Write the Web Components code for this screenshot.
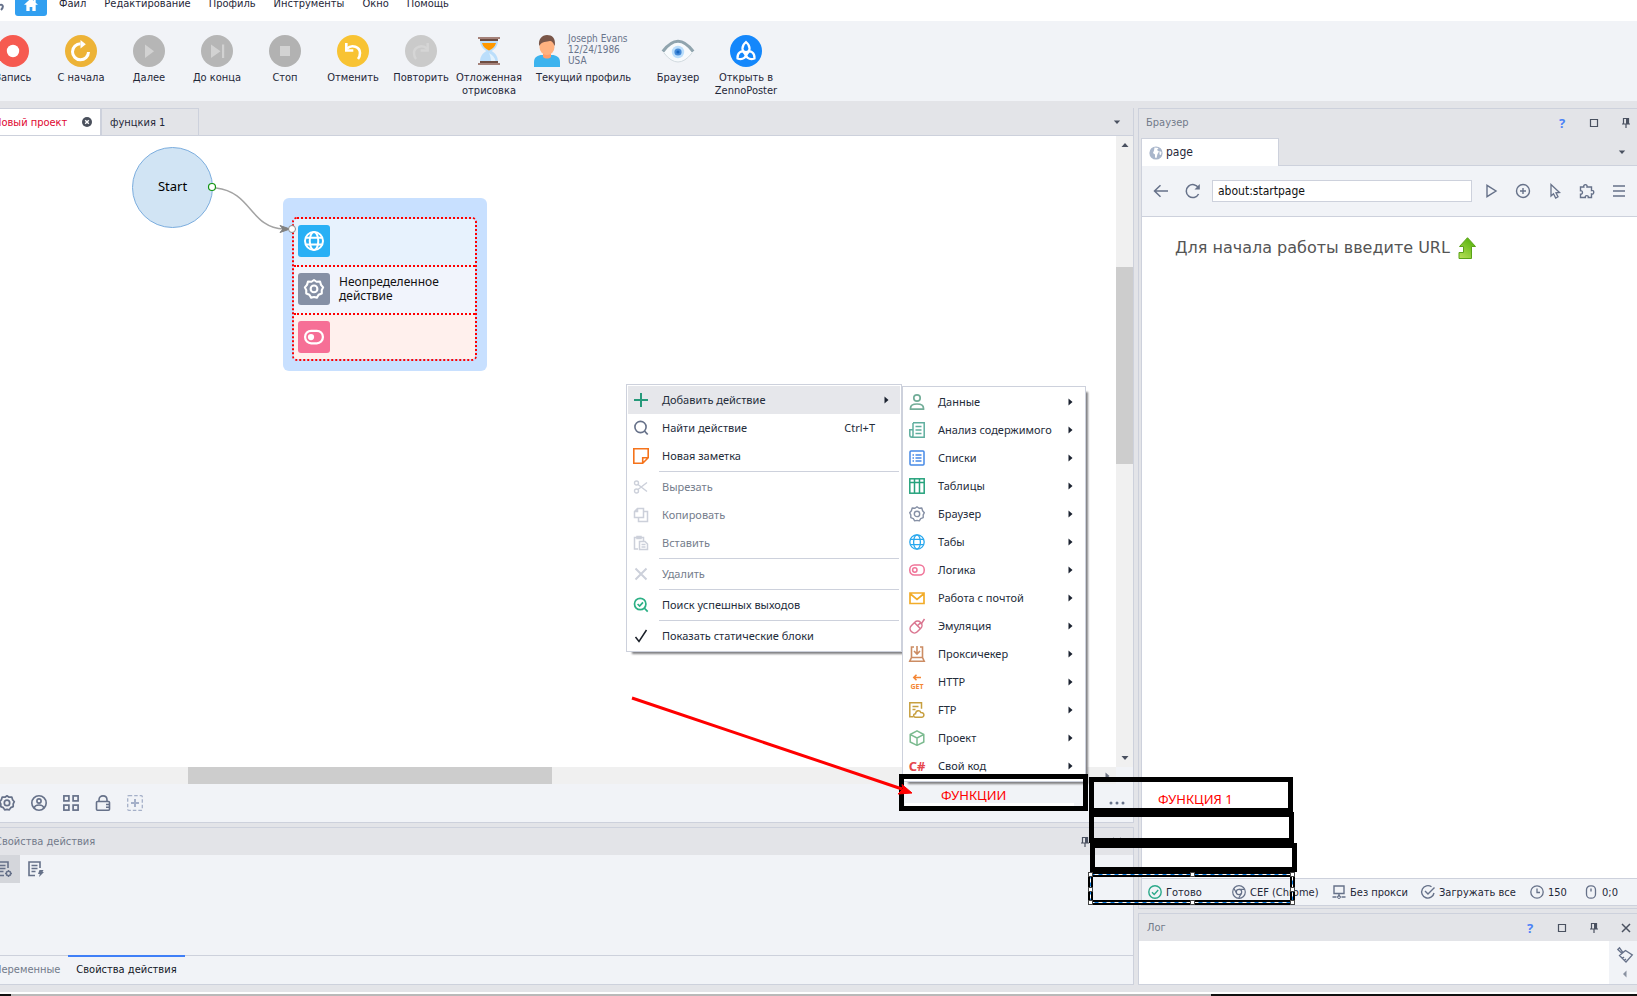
<!DOCTYPE html>
<html lang="ru">
<head>
<meta charset="utf-8">
<title>Новый проект</title>
<style>
  html, body { margin: 0; }
  body {
    --line: #cdd1dc;
    --chrome: #e3e4e8;
    --surface: #f1f3f7;
    --ink: #1f2738;
    --muted: #727a8a;
    --icon: #667189;
    --ui-font: "DejaVu Sans Condensed", "DejaVu Sans", sans-serif;
    --menu-font: "Noto Sans", "Open Sans", sans-serif;
    font: 11px/13px var(--ui-font);
    color: var(--ink);
    background: #fff;
    overflow-x: hidden;
  }
</style>
</head>
<body>
<studio-app></studio-app>

<script>
const RESET = `
  *, *::before, *::after { box-sizing: border-box; }
  :host { box-sizing: border-box; }
  button, input { font: inherit; color: inherit; margin: 0; padding: 0; border: 0; background: none; }
  a { color: inherit; text-decoration: none; }
`;

function define(name, css, markup) {
  customElements.define(name, class extends HTMLElement {
    connectedCallback() {
      if (this.shadowRoot) return;
      const template = document.createElement('template');
      template.innerHTML = `<style>${RESET}${css}</style>` + (typeof markup === 'function' ? markup(this) : markup);
      this.attachShadow({ mode: 'open' }).append(template.content.cloneNode(true));
    }
  });
}

/* ---------- icons: [viewBox size, drawing] ---------- */
const S = 'fill="none" stroke="currentColor" stroke-width="1.5"';
const GEAR = (w) => `<g fill="none" stroke="currentColor" stroke-width="${w}" stroke-linejoin="round"><path d="M8 .8 10 2.2 12.8 2 13.6 4.7 15.3 6.7 14.2 8.9 14.2 11.6 11.7 12.6 10.3 14.9 8 14.4 5.7 14.9 4.3 12.6 1.8 11.6 1.8 8.9 .7 6.7 2.4 4.7 3.2 2 6 2.2Z"/><circle cx="8" cy="7.9" r="2.7"/></g>`;
const GLOBE = (w) => `<g fill="none" stroke="currentColor" stroke-width="${w}"><circle cx="8" cy="8" r="7.2"/><ellipse cx="8" cy="8" rx="3.4" ry="7.2"/><path d="M1.4 5.3h13.2M1.4 10.7h13.2"/></g>`;
const ICONS = {
  home: [24, '<path fill="#fff" d="M12 2 1.500 11.500H5V21h5v-6h4v6h5v-9.500h3.500L19 8.500V4h-3v2Z"/>'],
  record: [32, '<circle cx="16" cy="16" r="16" fill="#f65a50"/><circle cx="16" cy="16" r="6.200" fill="#fff"/>'],
  restart: [32, '<circle cx="16" cy="16" r="16" fill="#edb337"/><path d="M15.500 8.800A8 8 0 1 0 23.500 17" fill="none" stroke="#fff" stroke-width="3"/><path d="M15.500 5 20.800 9.200 15.500 13.500Z" fill="#fff"/>'],
  next: [32, '<circle cx="16" cy="16" r="16" fill="#b6b6b6"/><path d="M12 9.500v13.500L21 16.200Z" fill="#d2d2d2"/>'],
  toend: [32, '<circle cx="16" cy="16" r="16" fill="#b6b6b6"/><path d="M10 9.500v13.500L19.500 16.200ZM21 9.500h2.200v13.500H21Z" fill="#d2d2d2"/>'],
  stop: [32, '<circle cx="16" cy="16" r="16" fill="#b2b2b2"/><path d="M11 11h10v10H11Z" fill="#d2d2d2"/>'],
  undo: [32, '<circle cx="16" cy="16" r="16" fill="#f8c333"/><path d="M10 13.500C15 9 23 12 23 18c0 2.500-.8 4.500-2 6" fill="none" stroke="#fff" stroke-width="2.600"/><path d="M9.300 8v7.500h7" fill="none" stroke="#fff" stroke-width="2.600"/>'],
  redo: [32, '<circle cx="16" cy="16" r="16" fill="#cacaca"/><path d="M22 13.500C17 9 9 12 9 18c0 2.500.8 4.500 2 6" fill="none" stroke="#d5d5d5" stroke-width="2.400"/><path d="M22.700 8v7.500h-7" fill="none" stroke="#d5d5d5" stroke-width="2.400"/>'],
  hourglass: [32, '<path d="M7 5h18c0 6-3 9-6.500 11C22 18 25 21 25 27H7c0-6 3-9 6.500-11C10 14 7 11 7 5Z" fill="#bbdefb"/><path d="M9 8h14c-1 4-4 6-7 7.500C13 14 10 12 9 8Z" fill="#ff9800"/><path d="M18 26c0-3-1-6-2-8 4 2 6 5 6.500 8Z" fill="#e3f2fd"/><path d="M5 2h22v2H5ZM5 28h22v2H5Z" fill="#a5827a"/><path d="M7 4h18v2H7ZM7 26h18v2H7Z" fill="#6d4c41"/>'],
  person: [32, '<path d="M3 32v-5c0-5 4-7 8-7h10c4 0 8 2 8 7v5Z" fill="#3cb3ee"/><path d="M12 17h8v5c-2 2-6 2-8 0Z" fill="#ff9d6b"/><ellipse cx="16" cy="12" rx="7.500" ry="8" fill="#ffb17f"/><path d="M8.200 11C7 4 11 0 16 0s9 3 7.800 11c-2-4-3-5-5-5-3 1-8 0-10.600 5Z" fill="#795548"/>'],
  eye: [32, '<path d="M0 16Q16-4 32 16 16 37 0 16Z" fill="#f7fafc"/><path d="M2 18Q16 36 30 18" fill="none" stroke="#d3dbe0" stroke-width="1"/><path d="M.8 16.500Q16-4 31.200 16.500" fill="none" stroke="#90a4ae" stroke-width="3"/><circle cx="16" cy="17" r="6.200" fill="#bbdefb"/><circle cx="16" cy="17" r="3.600" fill="#448ad8"/><circle cx="16" cy="17" r="1.600" fill="#1565c0"/>'],
  poster: [32, '<circle cx="16" cy="16" r="16" fill="#1487fb"/><g fill="none" stroke="#fff" stroke-width="2.200"><path d="M16 7C11 11 11.500 16 16 20 20.500 16 21 11 16 7Z"/><path d="M7.500 23.500C7 18 11 14.500 16.500 17.500 17 22 13 25.500 7.500 23.500Z"/><path d="M24.500 23.500C25 18 21 14.500 15.500 17.500 15 22 19 25.500 24.500 23.500Z"/></g>'],
  tabclose: [10, '<circle cx="5" cy="5" r="5" fill="#4a505c"/><path d="M3.200 3.200l3.600 3.600M6.800 3.200 3.200 6.800" stroke="#fff" stroke-width="1.400"/>'],
  plus: [16, '<path d="M8 1v14M1 8h14" fill="none" stroke="#26997a" stroke-width="2"/>'],
  search: [16, '<circle cx="7.500" cy="7" r="5.600" fill="none" stroke="#667189" stroke-width="1.600"/><path d="M11.500 11 14.700 14.500" stroke="#667189" stroke-width="1.800"/>'],
  note: [16, '<path d="M.8.800h14.400v8.900L9.700 15.200H.8ZM15 9.700H9.700V15" fill="none" stroke="#f5731b" stroke-width="1.600"/>'],
  cut: [16, `<g fill="none" stroke="currentColor" stroke-width="1.400"><circle cx="3.500" cy="4" r="2"/><circle cx="3.500" cy="12" r="2"/><path d="M5 5.500 14 12.500M5 10.500 14 3.500"/></g>`],
  copy: [16, `<g ${S}><path d="M4.500 1.500h6v9H1.500v-6ZM4.500 1.500v3h-3"/><path d="M11 4.500h3.500v10h-9V11"/></g>`],
  paste: [16, `<g ${S}><path d="M5 14H1.500V2.500h9V6M4 1.500h4v2H4Z"/><path d="M6.500 6.500H12l2.500 2.500v5.500h-8ZM8.500 9.500h4M8.500 12h4"/></g>`],
  remove: [16, '<path d="M2.500 2.500l11 11M13.500 2.500l-11 11" stroke="currentColor" stroke-width="2"/>'],
  found: [16, '<g fill="none" stroke="#2cb085" stroke-width="1.700"><circle cx="7.200" cy="7" r="5.700"/><path d="M4.600 7l2 2 3.400-3.600M11.200 11l3.500 3.700"/></g>'],
  check: [16, '<path d="M2.500 9 6 13.500 13.500 2" fill="none" stroke="#1b2029" stroke-width="1.500"/>'],
  data: [16, '<g fill="none" stroke="#72ad98" stroke-width="1.700"><circle cx="8" cy="4" r="3.200"/><path d="M1.500 15.200v-1C1.500 11 4 10 8 10s6.500 1 6.500 4.200v1Z"/></g>'],
  analysis: [16, '<g fill="none" stroke="#5fae9e" stroke-width="1.500"><path d="M4 .8h11.200v14.400H2.800C1.500 15.200.8 14.500.8 13V7.800H4M4 1v12c0 1.400-.5 2.200-1.500 2.200M6.500 4.500h6M6.500 8h6M6.500 11.500h6"/></g>'],
  list: [16, '<g fill="none" stroke="#4589e6" stroke-width="1.500"><rect x="1" y="1" width="14" height="14" rx="1"/><path d="M3.500 5h1.500M6.500 5h6M3.500 8h1.500M6.500 8h6M3.500 11h1.500M6.500 11h6"/></g>'],
  table: [16, '<g fill="none" stroke="#25a27c" stroke-width="1.500"><rect x=".8" y=".8" width="14.400" height="14.400"/><path d="M1 4.500h14M5.500 1v14M10.500 1v14"/></g>'],
  gear: [16, GEAR(1.4)],
  gearbold: [16, GEAR(1.7)],
  globe: [16, GLOBE(1.3)],
  globebold: [16, GLOBE(1.6)],
  toggle: [16, '<g fill="none" stroke="#f07398" stroke-width="1.500"><rect x=".8" y="3" width="14.400" height="10" rx="4.500"/><circle cx="5.800" cy="8" r="2.200"/></g>'],
  togglebold: [16, '<rect x=".9" y="3" width="14.200" height="10" rx="4.800" fill="none" stroke="#fff" stroke-width="1.800"/><circle cx="5.600" cy="8" r="2.500" fill="#fff"/>'],
  mail: [16, '<path d="M1 3h14v10.500H1ZM1.500 4 8 9.500 14.500 4" fill="none" stroke="#f2ac29" stroke-width="1.700"/>'],
  mouse: [16, '<g fill="none" stroke="#da7590" stroke-width="1.500"><rect x="2.800" y="2.500" width="8.500" height="13" rx="4" transform="rotate(45 7 9)"/><path d="M5.500 4.800l6 6M8.500 7.800 11 5.300l1.500.2L15.500 1"/></g>'],
  proxycheck: [16, '<g fill="none" stroke="#cc8c63" stroke-width="1.600"><path d="M5 1H2.500v10.500h11V1H11M8 0v7.500M5 5l3 3 3-3M.8 15.200l1.700-3.700h11l1.700 3.700Z"/></g>'],
  http: [16, '<path d="M12 3.500H5M7.500.800 4.800 3.500l2.700 2.700" fill="none" stroke="#f58634" stroke-width="1.600"/><text x="8" y="15" text-anchor="middle" font-family="Noto Sans, sans-serif" font-weight="700" font-size="7" fill="#f58634">GET</text>'],
  ftp: [16, '<g fill="none" stroke="#c79f3f" stroke-width="1.500"><path d="M4 14.800H.8V.8h11.700v6M3.500 4.500h6M3.500 7.500h3"/><path d="M6.500 15.200c-2.500 0-2.500-3.500 0-3.500C7 8 11 8 11.800 10.500c4-.3 4 4.700.7 4.700Z"/></g>'],
  project: [16, '<path d="M8 .8 14.800 4.500v7.500L8 15.300 1.200 12V4.500ZM1.500 4.700 8 8l6.500-3.300M8 8v7" fill="none" stroke="#7cbb90" stroke-width="1.500" stroke-linejoin="round"/>'],
  csharp: [16, '<text x="8" y="13" text-anchor="middle" font-family="Noto Sans, sans-serif" font-weight="700" font-size="13" fill="#e6484d">C#</text>'],
  profile: [16, '<g fill="none" stroke="currentColor" stroke-width="1.600"><circle cx="8" cy="8" r="7.200"/><circle cx="8" cy="6" r="2.100"/><path d="M3.300 13c.7-4 8.700-4 9.400 0"/></g>'],
  grid: [16, '<g fill="none" stroke="currentColor" stroke-width="1.700"><rect x=".9" y=".9" width="5" height="5"/><rect x="10.100" y=".9" width="5" height="5"/><rect x=".9" y="10.100" width="5" height="5"/><rect x="10.100" y="10.100" width="5" height="5"/></g>'],
  lock: [16, '<g fill="none" stroke="currentColor" stroke-width="1.600"><rect x="1.500" y="6.500" width="13" height="8.700" rx="1"/><path d="M4 6.500V5c0-5.500 8-5.500 8 0v1.500M11 9.500h3M11 12.300h3"/></g>'],
  addbox: [16, '<g fill="none" stroke="#a5b0c8"><rect x=".7" y=".7" width="14.600" height="14.600" rx="1" stroke-width="1.300" stroke-dasharray="3.500 2"/><path d="M8 4v8M4 8h8" stroke-width="2"/></g>'],
  dots: [16, '<g fill="currentColor"><circle cx="2" cy="8" r="1.500"/><circle cx="8" cy="8" r="1.500"/><circle cx="14" cy="8" r="1.500"/></g>'],
  docgear: [16, '<g fill="none" stroke="currentColor" stroke-width="1.600"><path d="M12 7V1H1v13.500h7M3.500 4.500h6M3.500 7.500h6M3.500 10.500h4"/><circle cx="12.500" cy="12.500" r="2.200"/></g><path d="M12.500 9v7M9 12.500h7" stroke="currentColor" stroke-width="1" stroke-dasharray="1.500 4"/>'],
  docflash: [16, '<path d="M12 7V1H1v13.500h6M3.500 4.500h6M3.500 7.500h6M3.500 10.500h4" fill="none" stroke="currentColor" stroke-width="1.600"/><path d="M11.500 9h4l-1 2h1.500L11 16l.8-3H10Z" fill="currentColor"/>'],
  down: [8, '<path d="M.8 2.500h6.400L4 6Z" fill="#4a5160"/>'],
  up: [8, '<path d="M.5 6h7L4 2Z" fill="#4a5160"/>'],
  dn: [8, '<path d="M.5 2h7L4 6Z" fill="#4a5160"/>'],
  right: [8, '<path d="M2.500.500v7L6.500 4Z" fill="currentColor"/>'],
  left: [8, '<path d="M5.500.500v7L2 4Z" fill="#8a92a1"/>'],
  max: [10, '<path d="M1.500 1.500h7v7h-7Z" fill="none" stroke="#4a5160" stroke-width="1.200"/>'],
  pin: [10, '<path d="M2.500.500h5v5.500h-5ZM1 6h8M5 6v4" fill="none" stroke="#4a5160" stroke-width="1.200"/><path d="M5 1h2v5H5Z" fill="#4a5160"/>'],
  close: [10, '<path d="M1 1l8 8M9 1 1 9" stroke="#4a5160" stroke-width="1.500"/>'],
  world: [14, '<circle cx="7" cy="7" r="6.600" fill="#a9b6cb"/><path d="M5.500 1.500 9.500 2 8 4l2 1.500L8.500 8l-1 4-1.500-.5V8.500L4 7l1-2.500ZM10.500 5l2 1-.5 3-1.500-.5Z" fill="#fff"/>'],
  back: [16, '<path d="M15 8H2M7.500 2.200 1.500 8l6 5.800" fill="none" stroke="currentColor" stroke-width="1.500"/>'],
  reload: [16, '<path d="M13.600 11A6.500 6.500 0 1 1 13.500 5" fill="none" stroke="currentColor" stroke-width="1.500"/><path d="M14.800 1v5.500H9.500Z" fill="currentColor"/>'],
  play: [16, '<path d="M4 2.300v11.400L13 8Z" fill="none" stroke="currentColor" stroke-width="1.400"/>'],
  circleplus: [16, '<g fill="none" stroke="currentColor" stroke-width="1.400"><circle cx="8" cy="8" r="6.500"/><path d="M8 5v6M5 8h6"/></g>'],
  pointer: [16, '<path d="M4 1.500v11.500l2.500-2.300 2.200 4.300 2.300-1.200-2-4 3.500-.3Z" fill="none" stroke="currentColor" stroke-width="1.300"/>'],
  puzzle: [16, '<path d="M1.500 4h3.300C4 .8 8.800.8 8 4h4.500v3.500c3-.8 3 4.300 0 3.500v3.500H9.300c.5-2.500-3.600-2.500-3 0H1.500v-3.300c2.600.4 2.600-3.900 0-3.500Z" fill="none" stroke="currentColor" stroke-width="1.400"/>'],
  burger: [16, '<path d="M2 3h12M2 8h12M2 13h12" stroke="currentColor" stroke-width="1.400"/>'],
  ready: [14, '<g fill="none" stroke="#2ba98a" stroke-width="1.400"><circle cx="7" cy="7" r="6.200"/><path d="M4 7.200l2.200 2.200L10.200 5"/></g>'],
  chrome: [14, '<g fill="none" stroke="currentColor" stroke-width="1.200"><circle cx="7" cy="7" r="6.300"/><circle cx="7" cy="7" r="2.700"/><path d="M7 4.300h5.500M4.600 8.300 2 3.500M9.400 8.300 6.800 13"/></g>'],
  proxy: [14, '<path d="M2 1h10v7.500H2ZM7 8.500V12M.5 12h4M9.500 12h4" fill="none" stroke="currentColor" stroke-width="1.400"/><circle cx="7" cy="12" r="1.500" fill="none" stroke="currentColor"/>'],
  load: [14, '<path d="M10.500 1.800A6.200 6.200 0 1 0 13 8M4 6l3 3 6.500-6.500" fill="none" stroke="currentColor" stroke-width="1.400"/>'],
  clock: [14, '<g fill="none" stroke="currentColor" stroke-width="1.300"><circle cx="7" cy="7" r="6.200"/><path d="M7 3.500V7.500h3"/></g>'],
  mousepos: [14, '<rect x="2.500" y=".8" width="9" height="12.400" rx="4" fill="none" stroke="currentColor" stroke-width="1.300"/><path d="M7 3.500v3" stroke="currentColor" stroke-width="1.400"/>'],
  broom: [16, '<g fill="none" stroke="currentColor" stroke-width="1.300"><path d="M8.500 3.500 15.300 8 9 15 2.500 8.500ZM4.800 6.200 8.500 3.500M5.500 5 2.500.800.800 2.500 4.800 6.200M5.500 11.500 7 10M7.500 13.300 9 12"/></g>'],
  uparrow: [22, '<defs><linearGradient id="g" x1="0" y1="1" x2=".6" y2="0"><stop offset="0" stop-color="#b9e05a"/><stop offset="1" stop-color="#58b40e"/></linearGradient></defs><path d="M11.500.700 19.500 9.500H15.500V21.500H3V15.500H7.500V9.500H3.500Z" fill="url(#g)" stroke="#5aa318"/>'],
  brand: [16, '<path d="M0 4C3 3 4 6 1 9" fill="none" stroke="#65708a" stroke-width="2"/>']
};

define('ui-icon', `:host { display: inline-flex; flex: none; } svg { display: block; overflow: visible; }`, (el) => {
  const [box, drawing] = ICONS[el.getAttribute('name')];
  const size = el.getAttribute('size') || box;
  return `<svg width="${size}" height="${size}" viewBox="0 0 ${box} ${box}" aria-hidden="true">${drawing}</svg>`;
});

/* ---------- main menu ---------- */
define('main-menu', `
  :host { display: block; height: 21px; background: #fff; overflow: hidden; }
  nav { display: flex; align-items: flex-start; gap: 18px; margin-top: -3px; }
  .home { display: flex; width: 32px; height: 19px; margin: 0 -6px 0 -3px; background: #319ff0; border-radius: 0 0 3px 3px; align-items: center; justify-content: center; }
  .home ui-icon { margin-bottom: 4px; }
  ui-icon.brand { margin-top: 4px; width: 0; }
`, `<nav><ui-icon class="brand" name="brand"></ui-icon>
  <button class="home" aria-label="Главная"><ui-icon name="home" size="16"></ui-icon></button>
  <a href="#">Файл</a><a href="#">Редактирование</a><a href="#">Профиль</a><a href="#">Инструменты</a><a href="#">Окно</a><a href="#">Помощь</a></nav>`);

/* ---------- toolbar ---------- */
define('tool-button', `
  :host { display: block; width: 68px; flex: none; }
  :host([wide]) { width: 121px; }
  button { display: flex; flex-direction: column; align-items: center; gap: 4px; width: 100%; white-space: nowrap; line-height: 13px; }
  .top { display: flex; gap: 5px; height: 32px; align-items: center; }
  :host([wide]) .top { align-self: flex-start; margin-left: 8px; }
  .top ::slotted(*) { font-size: 10px; line-height: 11px; text-align: left; color: #69748b; margin-top: -3px; }
`, (el) => `<button><span class="top"><ui-icon name="${el.getAttribute('icon')}"></ui-icon><slot name="info"></slot></span><span><slot></slot></span></button>`);

define('tool-bar', `
  :host { display: block; background: var(--surface); height: 80px; overflow: hidden; }
  div { display: flex; padding-top: 14px; margin-left: -21px; }
`, `<div role="toolbar"><slot></slot></div>`);

/* ---------- document tabs ---------- */
define('doc-tabs', `
  :host { display: flex; height: 28px; align-items: stretch; overflow: hidden; border-bottom: 1px solid var(--line); margin-bottom: -1px; position: relative; flex: none; }
  button { display: flex; align-items: center; border: 1px solid var(--line); border-bottom: 0; white-space: nowrap; }
  .active { background: #fff; color: #e0062f; width: 109px; margin-left: -7px; border-right-width: 2px; gap: 15px; }
  .other { width: 97px; border-left: 0; padding-left: 8px; }
  .list { border: 0; margin-left: auto; padding: 0 12px; }
`, `<button class="active">Новый проект<ui-icon name="tabclose"></ui-icon></button><button class="other">фунцкия 1</button>
  <button class="list" aria-label="Список вкладок"><ui-icon name="down"></ui-icon></button>`);

/* ---------- scroll bars ---------- */
define('scroll-track', `
  :host { display: flex; background: #f0f0f0; align-items: center; justify-content: space-between; color: #6b7280; }
  :host([vertical]) { flex-direction: column; width: 17px; padding: 5px 0; }
  :host(:not([vertical])) { height: 17px; padding: 0 5px; }
  .track { flex: 1; align-self: stretch; display: flex; }
  :host([vertical]) .track { flex-direction: column; }
  .thumb { background: #cdcdcd; }
`, (el) => {
  const v = el.hasAttribute('vertical');
  const [a, b, c] = el.getAttribute('parts').split(' ');
  return (v ? '<ui-icon name="up"></ui-icon>' : '') +
    `<span class="track"><span style="flex:${a}"></span><span class="thumb" style="flex:${b}"></span><span style="flex:${c}"></span></span>` +
    `<ui-icon name="${v ? 'dn' : 'right'}"></ui-icon>`;
});

/* ---------- flow diagram ---------- */
define('flow-start', `
  :host { display: flex; align-items: center; justify-content: center; width: 81px; height: 81px; padding-bottom: 3px; border-radius: 50%; background: #d1e4f4; border: 1px solid #7badde; font: 13px/16px var(--menu-font); color: #000; }
`, `<slot></slot>`);

define('flow-block', `
  :host { display: block; width: 204px; padding: 19px 10px 10px 9px; border-radius: 6px; background: #c8e0ff; font: 12px/14px var(--menu-font); color: #111; }
  .frame { border: 2px dotted #f00; border-radius: 5px; overflow: hidden; }
  .row { display: flex; align-items: flex-start; gap: 9px; height: 48px; padding: 6px 4px 0; background: #e7f2fd; border-bottom: 2px dotted #f00; }
  .row.mid { background: #f1f4fc; }
  .row.last { background: #fff0ed; height: 44px; border: 0; }
  .tile { display: flex; align-items: center; justify-content: center; width: 32px; height: 32px; border-radius: 3px; color: #fff; background: #29b0f5; }
  .mid .tile { background: #8690a5; }
  .last .tile { background: #f66f96; }
  .text { padding-top: 2px; }
`, `<div class="frame"><div class="row"><span class="tile"><ui-icon name="globebold" size="20"></ui-icon></span></div>
  <div class="row mid"><span class="tile"><ui-icon name="gearbold" size="20"></ui-icon></span><span class="text"><slot></slot></span></div>
  <div class="row last"><span class="tile"><ui-icon name="togglebold" size="20"></ui-icon></span></div></div>`);

define('flow-canvas', `
  :host { display: grid; grid-template: minmax(631px, 1fr) 17px / minmax(0, 1fr) 17px; flex: 1; background: var(--surface); }
  .free { position: relative; background: #fff; overflow: hidden; }
  .free > * { position: absolute; }
  flow-start { left: 132px; top: 11px; }
  flow-block { left: 283px; top: 62px; }
  svg { left: 0; top: 0; overflow: visible; }
`, `<div class="free"><flow-start>Start</flow-start><flow-block>Неопределенное<br>действие</flow-block>
  <svg width="500" height="250" aria-hidden="true"><path d="M216 52C252 56 250 92 284 93" fill="none" stroke="#a3a3a3" stroke-width="1.500"/>
  <path d="M280 89.500 290 93 280 96.500 283 93Z" fill="#808080" stroke="#808080"/><circle cx="212" cy="51" r="3.500" fill="#fff" stroke="#129412" stroke-width="1.200"/><circle cx="292" cy="93" r="3.500" fill="#fff" stroke="#8a8a8a"/></svg></div>
  <scroll-track vertical parts="118 197 290"></scroll-track><scroll-track parts="183 364 551"></scroll-track>`);

define('canvas-bar', `
  :host { display: block; height: 39px; flex: none; background: var(--surface); border-bottom: 1px solid var(--line); overflow: hidden; color: var(--icon); }
  div { display: flex; height: 38px; margin-left: -9px; align-items: center; }
  button { display: flex; width: 32px; justify-content: center; }
  button:last-child { margin-left: auto; }
`, `<div><button aria-label="Настройки"><ui-icon name="gearbold"></ui-icon></button><button aria-label="Профиль"><ui-icon name="profile"></ui-icon></button>
  <button aria-label="Сетка"><ui-icon name="grid"></ui-icon></button><button aria-label="Блокировка"><ui-icon name="lock"></ui-icon></button>
  <button aria-label="Добавить"><ui-icon name="addbox"></ui-icon></button><button aria-label="Ещё"><ui-icon name="dots"></ui-icon></button></div>`);

/* ---------- dock header ---------- */
define('dock-header', `
  :host { display: flex; align-items: center; height: 27px; flex: none; background: var(--chrome); color: var(--muted); overflow: hidden; white-space: nowrap; }
  .tools { display: flex; margin-left: auto; }
  button { display: flex; width: 32px; align-items: center; justify-content: center; }
  .help { color: #4c82f7; font: 700 13px/16px var(--menu-font); }
`, (el) => `<span><slot></slot></span><span class="tools">` + el.getAttribute('tools').split(' ').map((t) =>
  t === 'help' ? '<button class="help">?</button>' : `<button aria-label="${t}"><ui-icon name="${t}"></ui-icon></button>`).join('') + `</span>`);

define('action-panel', `
  :host { display: block; flex: none; margin-top: 4px; border: 1px solid var(--line); border-width: 1px 0; background: var(--surface); }
  dock-header { margin-left: -5px; }
  .body { display: flex; height: 100px; overflow: hidden; color: var(--icon); }
  .body button { display: flex; width: 32px; height: 28px; align-items: center; justify-content: center; }
  .body .on { background: #d4d6db; margin-left: -12px; }
  .tabs { display: flex; height: 29px; overflow: hidden; color: var(--muted); box-shadow: inset 0 1px var(--line); }
  .tabs button { padding: 0 8px; }
  .tabs button:first-child { margin-left: -14px; }
  .tabs .on { color: #12161f; border-top: 2px solid #3f7ff7; padding-bottom: 2px; }
`, `<dock-header tools="pin close">Свойства действия</dock-header>
  <div class="body"><button class="on" aria-label="Свойства"><ui-icon name="docgear"></ui-icon></button><button aria-label="События"><ui-icon name="docflash"></ui-icon></button></div>
  <div class="tabs"><button>Переменные</button><button class="on">Свойства действия</button></div>`);

/* ---------- browser ---------- */
define('browser-panel', `
  :host { display: flex; flex-direction: column; flex: 1; border: 1px solid var(--line); border-right: 0; padding: 0 0 2px 2px; background: var(--chrome); overflow: hidden; }
  dock-header { margin: 0 -5px 2px 0; padding-left: 5px; }
  .tabs { display: flex; height: 28px; flex: none; }
  .tab { display: flex; align-items: center; gap: 3px; width: 138px; padding-left: 7px; background: #fff; border: 1px solid var(--line); border-bottom: 0; font-size: 12px; }
  .rest { flex: 1; display: flex; align-items: center; justify-content: flex-end; padding-right: 11px; border-bottom: 1px solid var(--line); }
  form { display: flex; height: 51px; flex: none; align-items: center; border: 1px solid var(--line); border-width: 0 0 1px 1px; background: var(--surface); color: var(--icon); padding: 0 2px 0 3px; }
  form button { display: flex; width: 32px; justify-content: center; }
  input { flex: 1; min-width: 60px; height: 22px; margin: 0 3px; padding: 0 5px; border: 1px solid var(--line); background: #fff; font-size: 12px; color: #111; }
  .page { flex: 1; background: #fff; border-left: 1px solid var(--line); padding: 20px 33px; display: flex; align-items: flex-start; gap: 6px; font: 16px/22px "DejaVu Sans", sans-serif; color: #555; white-space: nowrap; }
  .status { display: flex; flex: none; align-items: center; height: 28px; border: 1px solid var(--line); border-right: 0; background: var(--surface); padding-left: 6px; color: var(--icon); white-space: nowrap; }
  .status span { display: flex; align-items: center; gap: 4px; }
  .status b { font-weight: 400; color: var(--ink); }
`, `<dock-header tools="help max pin">Браузер</dock-header>
  <div class="tabs"><button class="tab"><ui-icon name="world"></ui-icon>page</button><span class="rest"><ui-icon name="down"></ui-icon></span></div>
  <form onsubmit="return false"><button aria-label="Назад"><ui-icon name="back"></ui-icon></button><button aria-label="Обновить"><ui-icon name="reload"></ui-icon></button>
    <input type="text" aria-label="Адрес" value="about:startpage">
    <button aria-label="Перейти"><ui-icon name="play"></ui-icon></button><button aria-label="Новая вкладка"><ui-icon name="circleplus"></ui-icon></button>
    <button aria-label="Выбор элемента"><ui-icon name="pointer"></ui-icon></button><button aria-label="Расширения"><ui-icon name="puzzle"></ui-icon></button>
    <button aria-label="Меню"><ui-icon name="burger"></ui-icon></button></form>
  <div class="page"><span>Для начала работы введите URL</span><ui-icon name="uparrow"></ui-icon></div>
  <div class="status"><span style="width:84px"><ui-icon name="ready"></ui-icon><b>Готово</b></span><span style="width:100px"><ui-icon name="chrome"></ui-icon><b>CEF (Chrome)</b></span>
    <span style="width:89px"><ui-icon name="proxy"></ui-icon><b>Без прокси</b></span><span style="width:109px"><ui-icon name="load"></ui-icon><b>Загружать все</b></span>
    <span style="width:54px"><ui-icon name="clock"></ui-icon><b>150</b></span><span><ui-icon name="mousepos"></ui-icon><b>0;0</b></span></div>`);

define('log-panel', `
  :host { display: block; flex: none; margin-top: 4px; border: 1px solid var(--line); border-right: 0; overflow: hidden; background: #fff; }
  dock-header { padding: 0 0 0 8px; margin-right: -5px; }
  .body { display: flex; height: 43px; }
  .side { display: flex; flex-direction: column; align-items: center; justify-content: space-between; width: 28px; margin-left: auto; padding: 6px 0 6px 3px; background: var(--surface); color: var(--icon); }
`, `<dock-header tools="help max pin close">Лог</dock-header>
  <div class="body"><div class="side"><button aria-label="Очистить"><ui-icon name="broom"></ui-icon></button><ui-icon name="left" size="8"></ui-icon></div></div>`);

/* ---------- context menus ---------- */
define('menu-item', `
  :host { display: block; }
  button { display: flex; align-items: center; width: 100%; height: 28px; padding: 0 10px 0 5px; text-align: left; white-space: nowrap; color: #242c3a; }
  button:disabled { color: #757d8c; }
  button:disabled ui-icon { color: #ccd0da; }
  :host([current]) button { background: #e6e7eb; }
  .label { flex: 1; margin-left: 13px; }
  .key { margin-right: 15px; }
  .tint { display: flex; }
  .arrow { color: #1b2230; }
`, (el) => `<button ${el.hasAttribute('off') ? 'disabled' : ''}><span class="tint" style="color:${el.getAttribute('tint') || ''}"><ui-icon name="${el.getAttribute('icon')}"></ui-icon></span>
  <span class="label"><slot></slot></span>${el.hasAttribute('key') ? `<span class="key">${el.getAttribute('key')}</span>` : ''}${el.hasAttribute('sub') ? '<ui-icon class="arrow" name="right"></ui-icon>' : ''}</button>`);

define('popup-menu', `
  :host { display: block; background: #fff; border: 1px solid var(--line); padding: 1px; font: 11px/16px var(--menu-font); box-shadow: 4px 4px 2px -2px #808083; }
  ::slotted(hr) { height: 1px; margin: 1px 1px 1px 31px; border: 0; background: var(--line); }
`, `<slot></slot>`);

/* ---------- drawn marks over the window ---------- */
define('mark-box', `
  :host { display: block; border: 5px solid #000; font: 13px/18px var(--menu-font); color: #f00; }
`, `<slot></slot>`);

define('window-overlay', `
  :host { display: block; position: absolute; left: 0; top: 0; width: 0; height: 0; }
  popup-menu, mark-box, svg, .strip { position: absolute; }
  .actions { left: 626px; top: 384px; width: 276px; }
  .groups { left: 902px; top: 386px; width: 184px; }
  .strip { left: 905px; top: 803px; width: 169px; height: 3px; background: #fff; }
  .functions { left: 899px; top: 774px; width: 189px; height: 37px; padding: 7px 0 0 37px; }
  .f1 { left: 1089px; top: 777px; width: 204px; height: 36px; padding: 8px 0 0 64px; }
  .f2 { left: 1089px; top: 812px; width: 205px; height: 31px; }
  .f3 { left: 1090px; top: 843px; width: 207px; height: 29px; }
  .f4 { left: 1088px; top: 872px; width: 207px; height: 33px; }
  svg { left: 0; top: 0; overflow: visible; pointer-events: none; }
`, `
  <popup-menu class="actions">
    <menu-item icon="plus" sub current>Добавить действие</menu-item>
    <menu-item icon="search" key="Ctrl+T">Найти действие</menu-item>
    <menu-item icon="note">Новая заметка</menu-item><hr>
    <menu-item icon="cut" off>Вырезать</menu-item><menu-item icon="copy" off>Копировать</menu-item><menu-item icon="paste" off>Вставить</menu-item><hr>
    <menu-item icon="remove" off>Удалить</menu-item><hr>
    <menu-item icon="found">Поиск успешных выходов</menu-item><hr>
    <menu-item icon="check">Показать статические блоки</menu-item>
  </popup-menu>
  <popup-menu class="groups">
    <menu-item icon="data" sub>Данные</menu-item><menu-item icon="analysis" sub>Анализ содержимого</menu-item><menu-item icon="list" sub>Списки</menu-item>
    <menu-item icon="table" sub>Таблицы</menu-item><menu-item icon="gear" tint="#8690a5" sub>Браузер</menu-item><menu-item icon="globe" tint="#29a8ee" sub>Табы</menu-item>
    <menu-item icon="toggle" sub>Логика</menu-item><menu-item icon="mail" sub>Работа с почтой</menu-item><menu-item icon="mouse" sub>Эмуляция</menu-item>
    <menu-item icon="proxycheck" sub>Проксичекер</menu-item><menu-item icon="http" sub>HTTP</menu-item><menu-item icon="ftp" sub>FTP</menu-item>
    <menu-item icon="project" sub>Проект</menu-item><menu-item icon="csharp" sub>Свой код</menu-item>
  </popup-menu>
  <div class="strip"></div>
  <mark-box class="functions">ФУНКЦИИ</mark-box>
  <mark-box class="f1">ФУНКЦИЯ 1</mark-box><mark-box class="f2"></mark-box><mark-box class="f3"></mark-box><mark-box class="f4"></mark-box>
  <svg width="1300" height="910" aria-hidden="true">
    <path d="M632 698 902 789" fill="none" stroke="#f00" stroke-width="3"/><path d="M912 793 902 784.500 903 789 898 794Z" fill="#f00" stroke="#f00"/>
    <path d="M1090.500 874.500h202v28h-202Z" fill="none" stroke="#fff"/><path d="M1090.500 874.500h202v28h-202Z" fill="none" stroke="#0b7be0" stroke-dasharray="4 4"/>
    <g fill="#fff" stroke="#444"><path d="M1088.500 872.500h4v4h-4ZM1190.500 872.500h4v4h-4ZM1290.500 872.500h4v4h-4ZM1088.500 887.500h4v4h-4ZM1290.500 887.500h4v4h-4ZM1088.500 900.500h4v4h-4ZM1190.500 900.500h4v4h-4ZM1290.500 900.500h4v4h-4Z"/></g>
  </svg>`);

/* ---------- application shell ---------- */
define('studio-app', `
  :host { display: flex; flex-direction: column; min-height: 100vh; position: relative; overflow: hidden; }
  main { flex: 1; display: grid; grid-template-columns: minmax(0, 1134fr) minmax(0, 499fr); column-gap: 4px; padding: 7px 0; background: var(--chrome); }
  .left, .right { display: flex; flex-direction: column; min-width: 0; }
  .work { display: flex; flex-direction: column; flex: 1; border-right: 1px solid var(--line); }
  action-panel { border-right: 1px solid var(--line); }
  flow-canvas { margin-top: 1px; }
  footer { display: flex; height: 4px; border-top: 2px solid #fff; background: #111; }
  footer span { flex: 1200; margin-left: 11px; background: #b9b9b9; }
  footer i { flex: 426; }
`, `
  <main-menu></main-menu>
  <tool-bar>
    <tool-button icon="record">Запись</tool-button><tool-button icon="restart">С начала</tool-button><tool-button icon="next">Далее</tool-button>
    <tool-button icon="toend">До конца</tool-button><tool-button icon="stop">Стоп</tool-button><tool-button icon="undo">Отменить</tool-button>
    <tool-button icon="redo">Повторить</tool-button><tool-button icon="hourglass">Отложенная<br>отрисовка</tool-button>
    <tool-button icon="person" wide><span slot="info">Joseph Evans<br>12/24/1986<br>USA</span>Текущий профиль</tool-button>
    <tool-button icon="eye">Браузер</tool-button><tool-button icon="poster">Открыть в<br>ZennoPoster</tool-button>
  </tool-bar>
  <main>
    <div class="left"><div class="work"><doc-tabs></doc-tabs><flow-canvas></flow-canvas><canvas-bar></canvas-bar></div><action-panel></action-panel></div>
    <div class="right"><browser-panel></browser-panel><log-panel></log-panel></div>
  </main>
  <footer><span></span><i></i></footer>
  <window-overlay></window-overlay>`);
</script>
</body>
</html>
